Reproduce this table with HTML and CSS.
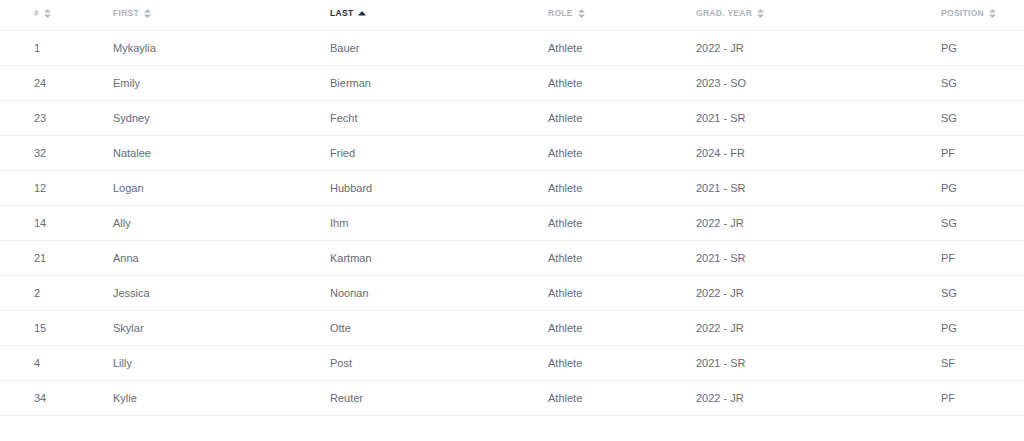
FILE: index.html
```html
<!DOCTYPE html>
<html>
<head>
<meta charset="utf-8">
<link rel="stylesheet" href="styles.css">
</head>
<body>
<table class="roster">
  <colgroup>
    <col class="c1"><col class="c2"><col class="c3"><col class="c4"><col class="c5"><col class="c6">
  </colgroup>
  <thead>
    <tr>
      <th class="first-cell"><span class="h"># <svg class="sort" viewBox="0 0 7 9"><path d="M3.5 0 L7 3.5 H0 Z M0 5.5 H7 L3.5 9 Z"/></svg></span></th>
      <th><span class="h">First <svg class="sort" viewBox="0 0 7 9"><path d="M3.5 0 L7 3.5 H0 Z M0 5.5 H7 L3.5 9 Z"/></svg></span></th>
      <th class="active"><span class="h">Last <svg class="sort up" viewBox="0 0 8 5"><path d="M4 0 L8 4.5 H0 Z"/></svg></span></th>
      <th><span class="h">Role <svg class="sort" viewBox="0 0 7 9"><path d="M3.5 0 L7 3.5 H0 Z M0 5.5 H7 L3.5 9 Z"/></svg></span></th>
      <th><span class="h">Grad. Year <svg class="sort" viewBox="0 0 7 9"><path d="M3.5 0 L7 3.5 H0 Z M0 5.5 H7 L3.5 9 Z"/></svg></span></th>
      <th><span class="h">Position <svg class="sort" viewBox="0 0 7 9"><path d="M3.5 0 L7 3.5 H0 Z M0 5.5 H7 L3.5 9 Z"/></svg></span></th>
    </tr>
  </thead>
  <tbody>
    <tr><td class="first-cell">1</td><td>Mykaylia</td><td>Bauer</td><td>Athlete</td><td>2022 - JR</td><td>PG</td></tr>
    <tr><td class="first-cell">24</td><td>Emily</td><td>Bierman</td><td>Athlete</td><td>2023 - SO</td><td>SG</td></tr>
    <tr><td class="first-cell">23</td><td>Sydney</td><td>Fecht</td><td>Athlete</td><td>2021 - SR</td><td>SG</td></tr>
    <tr><td class="first-cell">32</td><td>Natalee</td><td>Fried</td><td>Athlete</td><td>2024 - FR</td><td>PF</td></tr>
    <tr><td class="first-cell">12</td><td>Logan</td><td>Hubbard</td><td>Athlete</td><td>2021 - SR</td><td>PG</td></tr>
    <tr><td class="first-cell">14</td><td>Ally</td><td>Ihm</td><td>Athlete</td><td>2022 - JR</td><td>SG</td></tr>
    <tr><td class="first-cell">21</td><td>Anna</td><td>Kartman</td><td>Athlete</td><td>2021 - SR</td><td>PF</td></tr>
    <tr><td class="first-cell">2</td><td>Jessica</td><td>Noonan</td><td>Athlete</td><td>2022 - JR</td><td>SG</td></tr>
    <tr><td class="first-cell">15</td><td>Skylar</td><td>Otte</td><td>Athlete</td><td>2022 - JR</td><td>PG</td></tr>
    <tr><td class="first-cell">4</td><td>Lilly</td><td>Post</td><td>Athlete</td><td>2021 - SR</td><td>SF</td></tr>
    <tr><td class="first-cell">34</td><td>Kylie</td><td>Reuter</td><td>Athlete</td><td>2022 - JR</td><td>PF</td></tr>
  </tbody>
</table>
</body>
</html>
```

FILE: styles.css
```css
html, body {
  margin: 0;
  padding: 0;
  background: #ffffff;
}

body {
  font-family: "Liberation Sans", Arial, sans-serif;
}

.roster {
  width: 1024px;
  border-collapse: collapse;
  table-layout: fixed;
}

.c1 { width: 113px; }
.c2 { width: 217px; }
.c3 { width: 218px; }
.c4 { width: 148px; }
.c5 { width: 245px; }
.c6 { width: 83px; }

.roster th,
.roster td {
  padding: 0;
  text-align: left;
  border-bottom: 1px solid #ebedf0;
}

.roster th.first-cell,
.roster td.first-cell {
  padding-left: 34px;
}

.roster th {
  height: 30px;
  font-size: 8.5px;
  font-weight: bold;
  text-transform: uppercase;
  letter-spacing: 0.3px;
  color: #aeb2b9;
  vertical-align: middle;
}

.roster th .h {
  display: inline-flex;
  align-items: center;
  gap: 5px;
  position: relative;
  top: -2px;
}

.roster th.active {
  color: #1f2940;
}

.sort {
  width: 7px;
  height: 9px;
  fill: #b4b8bf;
}

.sort.up {
  width: 8px;
  height: 5px;
  fill: #1f2940;
}

.roster td {
  height: 34px;
  font-size: 11px;
  color: #646b77;
  vertical-align: middle;
}
```
